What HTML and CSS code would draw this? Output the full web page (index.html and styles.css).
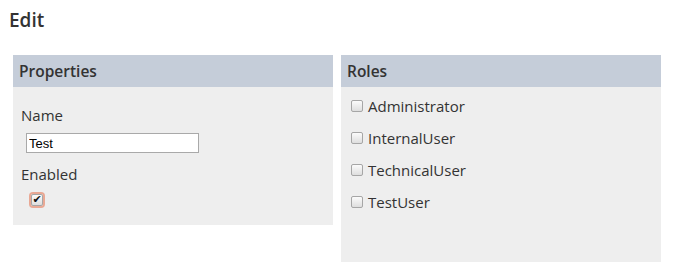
FILE: index.html
```html
<!DOCTYPE html>
<html lang="en">
<head>
    <meta charset="UTF-8">
    <title>Edit</title>
    <link rel="stylesheet" href="styles.css">
</head>
<body>

    <h2 class="page-title">Edit</h2>

    <div class="panels">
        <div class="panel panel-props">
            <div class="panel-head">Properties</div>
            <div class="panel-body">
                <label class="field-label" for="name">Name</label>
                <input type="text" id="name" class="field-input" value="Test">
                <label class="field-label" for="enabled">Enabled</label>
                <input type="checkbox" id="enabled" class="check field-check" checked>
            </div>
        </div>

        <div class="panel panel-roles">
            <div class="panel-head">Roles</div>
            <div class="panel-body">
                <label class="role"><input type="checkbox" class="check"> Administrator</label>
                <label class="role"><input type="checkbox" class="check"> InternalUser</label>
                <label class="role"><input type="checkbox" class="check"> TechnicalUser</label>
                <label class="role"><input type="checkbox" class="check"> TestUser</label>
            </div>
        </div>
    </div>

</body>
</html>
```
FILE: styles.css
```css
body {
    font-family: "Open Sans", sans-serif;
    margin: 0;
    padding: 0;
    background: white;
    color: #333;
}
.page-title {
    font-size: 19px;
    font-weight: 600;
    margin: 0;
    padding: 8px 9px 0;
    line-height: 24px;
}
.panels {
    display: flex;
    gap: 8px;
    margin: 23px 0 0 13px;
}
.panel {
    width: 320px;
    background: #eeeeee;
}
.panel-props {
    height: 170px;
}
.panel-roles {
    height: 210px;
}
.panel-head {
    background: #c5cdd9;
    height: 32px;
    line-height: 32px;
    padding-left: 6px;
    font-size: 15.5px;
    font-weight: 600;
}
.panel-body {
    padding: 3px 8px;
}
.panel-props .panel-body {
    padding: 17px 8px;
}
.field-label {
    display: block;
    font-size: 15px;
    line-height: 22px;
}
.field-input {
    display: block;
    width: 173px;
    height: 20px;
    box-sizing: border-box;
    margin: 7px 0 10px 5px;
    padding: 0 2px;
    border: 1px solid #a9a9a9;
    font-family: Arial, "Liberation Sans", sans-serif;
    font-size: 13px;
    color: black;
    outline: none;
}
.check {
    appearance: none;
    -webkit-appearance: none;
    box-sizing: border-box;
    width: 12px;
    height: 12px;
    border: 1px solid #a6a6a6;
    border-radius: 2px;
    background: linear-gradient(#fbfbfb, #dedede);
    position: relative;
}
.check:checked::after {
    content: "\2714";
    position: absolute;
    left: 0;
    right: 0;
    top: 0;
    bottom: 0;
    text-align: center;
    line-height: 10px;
    font-family: "DejaVu Sans", sans-serif;
    font-size: 11px;
    color: #111;
}
.field-check {
    display: block;
    margin: 9px 0 0 10px;
    box-shadow: 0 0 0 2px rgba(230, 130, 100, 0.65);
}
.role {
    display: flex;
    align-items: center;
    height: 32px;
    font-size: 15px;
}
.role .check {
    margin: 0 5px 0 2px;
}
```
